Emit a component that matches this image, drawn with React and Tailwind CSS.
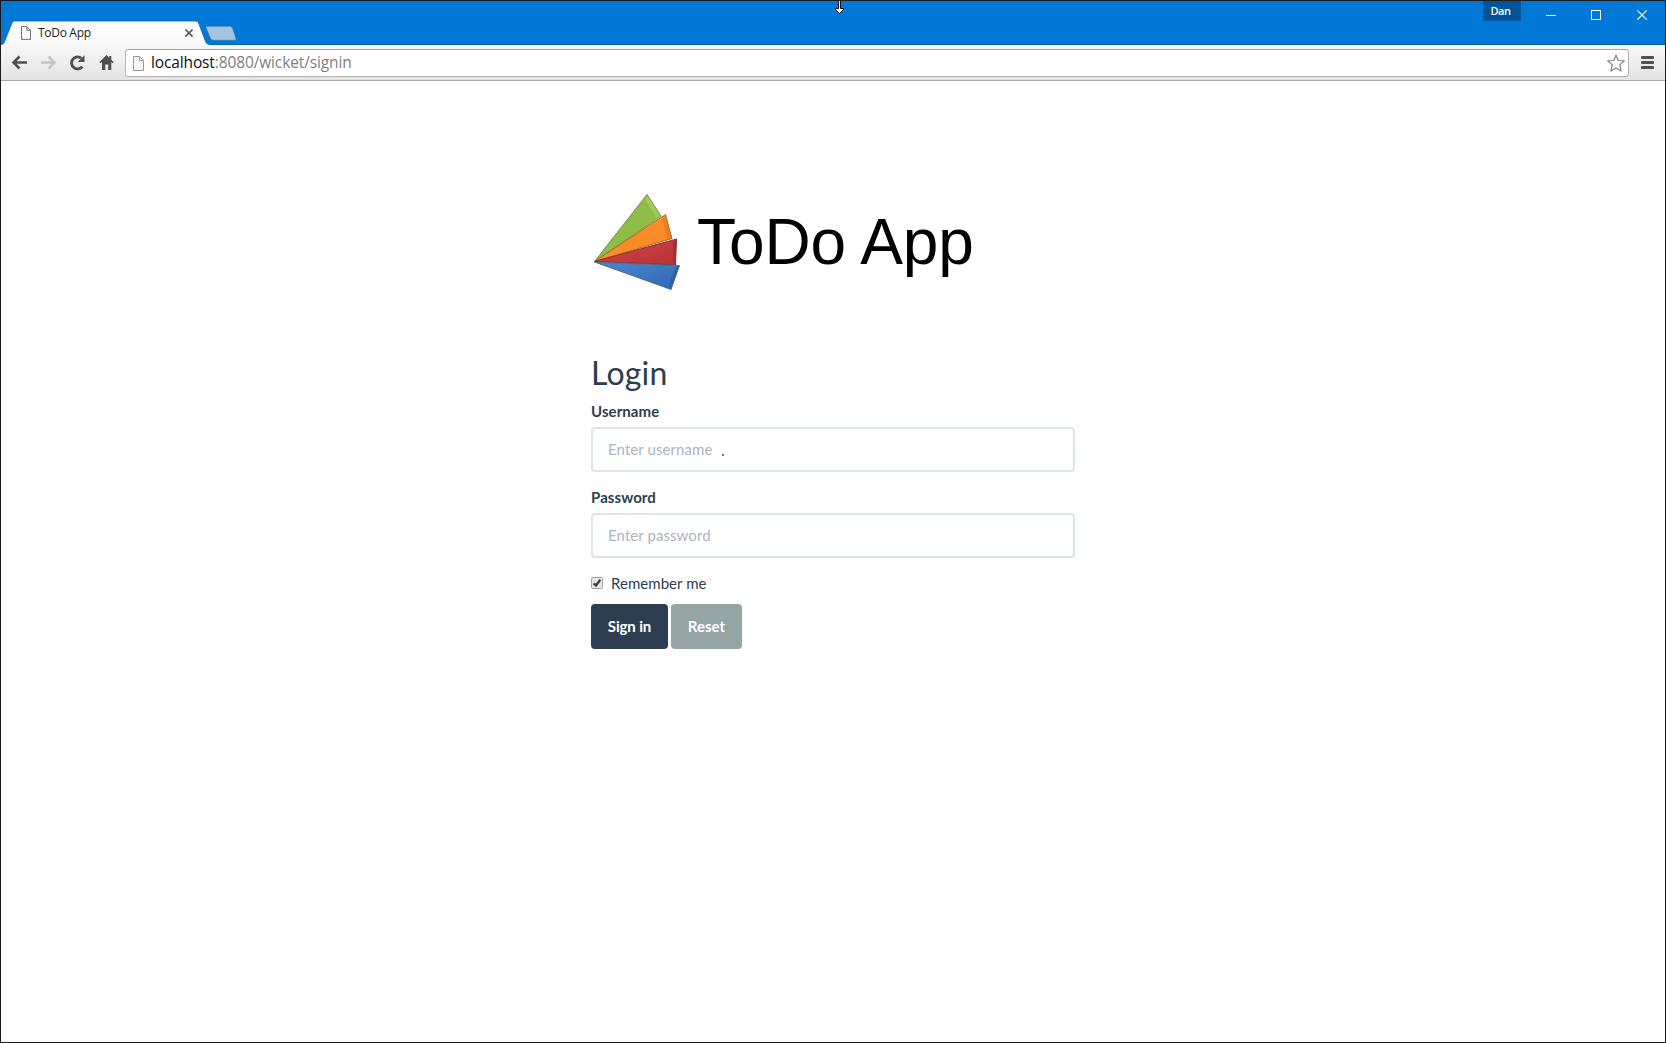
import React from "react";

function PageIcon({ className, fill = "#fff", stroke }) {
  return (
    <svg className={className} viewBox="0 0 11 15" fill={fill} stroke={stroke}>
      <path d="M.5 .5H6.5L10.5 4.5V14.5H.5Z" />
      <path d="M6.5 .5V4.5H10.5" fill="none" />
    </svg>
  );
}

function TitleBar() {
  return (
    <div className="relative flex h-11 items-start bg-[#0078d7]">
      <svg className="absolute left-0 top-0 h-11 w-60" viewBox="1 1 240 44">
        <defs>
          <linearGradient id="tab" x1="0" y1="0" x2="0" y2="1">
            <stop offset="0" stopColor="#fff" />
            <stop offset="1" stopColor="#f8f8f8" />
          </linearGradient>
        </defs>
        <path
          d="M1 44.5C4 44.5 4.500 42 5.200 40L11.500 24C12.500 21.500 13.500 21 15.500 21H194.500C197 21 198 21.500 199 24L205 40C206 43 207 44.500 210 44.500V46H1Z"
          fill="url(#tab)"
          stroke="#0060ac"
          strokeWidth=".8"
        />
        <path
          d="M207.500 26.200H228.500C231 26.200 232 26.700 232.700 28.500L235.900 38C236.500 40 236 40.300 234 40.300H214.500C212 40.300 211 39.700 210.300 38L206.300 28.500C205.500 26.800 206 26.200 207.500 26.200Z"
          fill="#a6c4e0"
          stroke="#2a78bd"
          strokeWidth=".7"
        />
      </svg>
      <div className="relative flex h-11 w-[192px] items-center pl-5 pt-5">
        <PageIcon className="h-[14px] w-[10px]" stroke="#5a5a5a" />
        <span className="ml-[7px] whitespace-nowrap font-['Open_Sans',sans-serif] text-[12px] leading-6 tracking-[-0.3px] text-[#222]">
          ToDo App
        </span>
        <svg className="ml-auto h-2 w-2" viewBox="0 0 8 8">
          <path d="M.5 .5L7.500 7.500M7.500 .5L.5 7.500" stroke="#5b5b5b" strokeWidth="1.600" />
        </svg>
      </div>
      <div className="h-11 grow border-b border-[#0060ac] ml-[17px]" />
      <svg className="absolute left-[832px] top-0 h-[14px] w-[12px]" viewBox="833 1 12 14">
        <path d="M838.500 0V8.500H835.500V9.500L839.500 13.500L843.500 9.500V8.500H840.500V0" fill="#fff" stroke="#111" />
      </svg>
      <div className="flex h-11 border-b border-[#0060ac]">
        <div className="flex h-5 w-[38px] items-center justify-center bg-[#005499] pr-[3px] font-['Open_Sans',sans-serif] text-[11px] font-semibold tracking-[-0.4px] text-white">
          Dan
        </div>
        <svg className="h-[30px] w-[144px]" viewBox="1521 1 144 30" fill="none" stroke="#fff">
          <path d="M1546 15.500H1556" />
          <rect x="1591.500" y="10.500" width="9" height="9" />
          <path d="M1637.300 10.300L1646.700 19.700M1646.700 10.300L1637.300 19.700" strokeWidth="1.200" />
        </svg>
      </div>
    </div>
  );
}

function Toolbar() {
  return (
    <div className="flex h-9 items-start border-b border-[#a9a9a9] bg-linear-to-b from-[#f8f8f8] to-[#e3e3e3] pt-1">
      <svg className="h-7 w-[124px]" viewBox="1 49 124 28" fill="none">
        <g strokeWidth="2.600">
          <path d="M27 62.500H14M19.500 56.500L13.500 62.500L19.500 68.500" stroke="#505050" />
          <path d="M41 62.500H54M48.500 56.500L54.500 62.500L48.500 68.500" stroke="#c6c6c6" />
        </g>
        <path d="M82.300 66.600A6 6 0 1 1 81.300 58.200" stroke="#505050" strokeWidth="2.900" />
        <path d="M84.500 55.200V62H77.700Z" fill="#505050" />
        <path
          d="M106.500 55L99.300 62.200L100.300 63.200L102 62V70H105.300V64.500H108.200V70H111.300V62L112.700 63.200L113.700 62.200L111.300 59.700V56H109.300V57.700Z"
          fill="#505050"
        />
      </svg>
      <div className="flex h-7 w-[1504px] items-center rounded-[3px] border border-[#b5b5b5] border-t-[#a5a5a5] bg-white pl-[7px] pr-[3px]">
        <PageIcon className="h-[15px] w-[11px]" fill="#f7f7f7" stroke="#999" />
        <span className="mb-[2px] ml-[7px] whitespace-nowrap font-['Open_Sans',sans-serif] text-[15.500px] leading-6 tracking-[-0.130px] text-[#808080]">
          <span className="text-[#111]">localhost</span>:8080/wicket/signin
        </span>
        <svg className="ml-auto h-[18px] w-[18px]" viewBox="0 0 18 18">
          <path
            d="M9 1L11.200 6.500L17.300 6.900L12.700 10.900L14.100 16.900L9 13.900L3.900 16.900L5.300 10.900L.7 6.900L6.800 6.500Z"
            fill="#fff"
            stroke="#808080"
            strokeWidth="1.200"
            strokeLinejoin="round"
          />
        </svg>
      </div>
      <div className="ml-3 mt-[7px] flex w-[13px] flex-col gap-[2px]">
        <div className="h-[3px] rounded-[1px] bg-[#505050]" />
        <div className="h-[3px] rounded-[1px] bg-[#505050]" />
        <div className="h-[3px] rounded-[1px] bg-[#505050]" />
      </div>
    </div>
  );
}

const BLADES = [
  { id: "green", points: "14.5,81.5 67,14.5 81,36", from: "#8dbb45", to: "#93bf48", edge: "#6b8f3a", bevel: "67,14.5 81,36 76.5,38.5 65.5,20", shade: "#a9cf62" },
  { id: "orange", points: "14.5,81.5 85.5,34.500 92,58.5", from: "#ff9430", to: "#f58420", edge: "#a96420", bevel: "85.5,34.5 92,58.5 87.5,59.5 82.500,39", shade: "#dd7a20" },
  { id: "red", points: "14.5,81.5 96.5,59 95.5,85", from: "#cb4040", to: "#b83438", edge: "#812326", bevel: "96.5,59 95.5,85 92.5,82 93,62.5", shade: "#9c2c30" },
  { id: "blue", points: "14.5,82 99.5,85.500 91,109.5", from: "#477fcb", to: "#2f69b2", edge: "#4d6380", bevel: "99.5,85.5 91,109.5 88.5,105.5 95,88", shade: "#2c5c9c" },
];

function Logo() {
  return (
    <svg className="h-[120px] w-[110px] shrink-0" viewBox="0 0 110 120">
      <defs>
        {BLADES.map((b) => (
          <linearGradient key={b.id} id={b.id} x1="0" y1="0" x2="1" y2="1">
            <stop offset="0.2" stopColor={b.from} />
            <stop offset="1" stopColor={b.to} />
          </linearGradient>
        ))}
      </defs>
      {BLADES.map((b) => (
        <g key={b.id} strokeLinejoin="round">
          <polygon points={b.points} fill={`url(#${b.id})`} />
          <polygon points={b.bevel} fill={b.shade} fillOpacity=".7" />
          <polygon points={b.points} fill="none" stroke={b.edge} strokeWidth=".9" />
        </g>
      ))}
    </svg>
  );
}

function Field({ label, placeholder, type, children }) {
  return (
    <div className="relative mb-[15px]">
      <label className="mb-[5px] block h-[21px] text-[15px] font-bold leading-[21px] tracking-[0.080px]">{label}</label>
      <input
        type={type}
        placeholder={placeholder}
        className="block h-[45px] w-full rounded-[4px] border-2 border-[#dce4ec] bg-white px-[15px] pb-[2px] text-[15px] leading-[21px] tracking-[0.080px] placeholder:text-[#acb6c0] placeholder:opacity-100"
      />
      {children}
    </div>
  );
}

function LoginPage() {
  return (
    <main className="ml-[590px] w-[484px] font-[Lato,sans-serif] text-[15px] text-[#2c3e50]">
      <div className="-ml-[11px] mt-[99px] flex h-[120px]">
        <Logo />
        <h1 className="ml-[7px] mt-[26px] whitespace-nowrap font-['Liberation_Sans',sans-serif] text-[64px] leading-[73px] tracking-[-0.1px] text-black">
          ToDo App
        </h1>
      </div>
      <h2 className="mt-[55px] h-[36px] text-[32px] leading-[36px] tracking-[0.2px]">Login</h2>
      <form className="mt-[10px]">
        <Field label="Username" placeholder="Enter username" type="text">
          <span className="absolute left-[131px] top-[53px] h-[2px] w-[2px] bg-[#777]" />
        </Field>
        <Field label="Password" placeholder="Enter password" type="password" />
        <label className="flex h-[21px] items-center leading-[21px]">
          <svg className="mb-[2px] h-3 w-3" viewBox="0 0 12 12">
            <rect x=".5" y=".5" width="11" height="11" rx="1.500" fill="#e7e7e7" stroke="#a6a6a6" />
            <path d="M2.700 6.300L5 8.500L9.300 2.800" fill="none" stroke="#3f3f3f" strokeWidth="2.300" />
          </svg>
          <span className="ml-2 tracking-[0.050px]">Remember me</span>
        </label>
        <div className="mt-[10px] flex gap-[3px] font-bold text-white">
          <button type="button" className="h-[45px] w-[77px] rounded-[4px] bg-[#2c3e50] tracking-[-0.150px]">Sign in</button>
          <button type="button" className="h-[45px] w-[71px] rounded-[4px] bg-[#95a5a6]">Reset</button>
        </div>
      </form>
    </main>
  );
}

export default function App() {
  return (
    <div className="h-[1043px] w-[1666px] overflow-hidden border border-[#1b1b1b] bg-white">
      <TitleBar />
      <Toolbar />
      <LoginPage />
    </div>
  );
}
